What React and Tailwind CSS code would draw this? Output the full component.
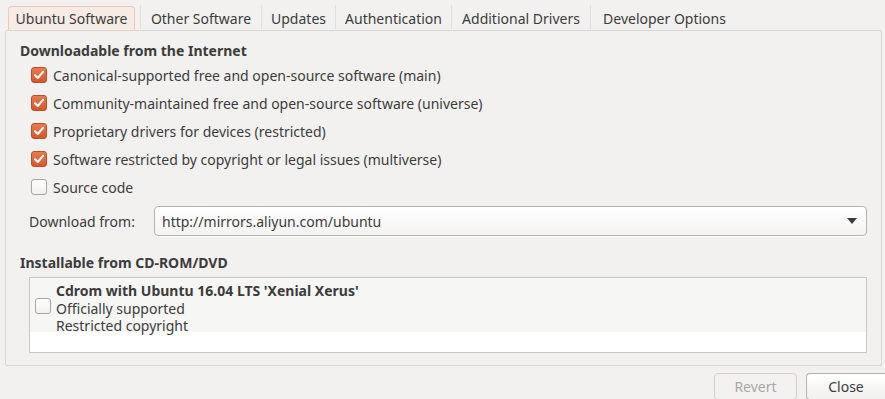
import React, { useState } from "react";

const tabs = [
  { name: "Ubuntu Software", w: "w-[127px]" },
  { name: "Other Software", w: "w-[120px]" },
  { name: "Updates", w: "w-[73px]" },
  { name: "Authentication", w: "w-[115px]" },
  { name: "Additional Drivers", w: "w-[138px]" },
  { name: "Developer Options", w: "w-[147px]" },
];

const sources = [
  { label: "Canonical-supported free and open-source software (main)", on: true },
  { label: "Community-maintained free and open-source software (universe)", on: true },
  { label: "Proprietary drivers for devices (restricted)", on: true },
  { label: "Software restricted by copyright or legal issues (multiverse)", on: true },
  { label: "Source code", on: false },
];

function Check({ on, onClick, className = "" }) {
  return (
    <span
      onClick={onClick}
      className={
        "flex h-[16px] w-[16px] shrink-0 items-center justify-center rounded-[3px] border " +
        (on
          ? "border-[#b5502a] bg-gradient-to-b from-[#ea7a4f] to-[#d4572a] "
          : "border-[#a9a6a2] bg-gradient-to-b from-white to-[#f1f0ee] ") +
        className
      }
    >
      {on && (
        <svg width="12" height="12" viewBox="0 0 12 12">
          <path d="M2 6.2 L4.8 9 L10 2.8" fill="none" stroke="#fff" strokeWidth="2" strokeLinecap="round" strokeLinejoin="round" />
        </svg>
      )}
    </span>
  );
}

export default function App() {
  const [checks, setChecks] = useState(sources.map((s) => s.on));
  const [cdrom, setCdrom] = useState(false);

  return (
    <div
      className="h-[399px] w-[885px] overflow-hidden bg-[#f2f1f0] text-[14px] text-[#3c3c3c]"
      style={{ fontFamily: '"Noto Sans", "Open Sans", sans-serif' }}
    >
      <div className="flex h-[30px] items-end pl-[8px]">
        {tabs.map((t, i) => (
          <div key={t.name} className="flex items-end">
            {i > 0 && <span className="mb-[1px] h-[24px] w-px bg-[#e2e0dd]" />}
            <div
              className={
                "flex h-[24px] items-center justify-center whitespace-nowrap " +
                t.w +
                (i === 0
                  ? " mr-[5px] rounded-t-[4px] border border-b-0 border-[#efc7b4] bg-[#f7ebe5]"
                  : "")
              }
            >
              {t.name}
            </div>
          </div>
        ))}
      </div>

      <div className="mx-[5px] h-[336px] w-[877px] rounded-[2px] border border-[#d9d7d3] bg-[#f2f1f0] px-[14px] pt-[10px]">
        <div className="font-bold leading-[20px]">Downloadable from the Internet</div>
        <div className="flex flex-col">
          {sources.map((s, i) => (
            <label key={s.label} className="flex h-[28px] items-center gap-[6px] pl-[11px]">
              <Check
                on={checks[i]}
                onClick={() => setChecks(checks.map((c, j) => (j === i ? !c : c)))}
              />
              <span>{s.label}</span>
            </label>
          ))}
        </div>

        <div className="mt-[5px] flex items-center pl-[9px]">
          <span className="w-[125px]">Download from:</span>
          <div className="flex h-[30px] flex-1 items-center justify-between rounded-[4px] border border-[#b6b3ae] bg-gradient-to-b from-white to-[#f4f3f2] pl-[7px] pr-[9px] shadow-[0_1px_0_#ffffff]">
            <span>http://mirrors.aliyun.com/ubuntu</span>
            <svg width="10" height="6" viewBox="0 0 10 6">
              <path d="M0 0 H10 L5 6 Z" fill="#3c3c3c" />
            </svg>
          </div>
        </div>

        <div className="mt-[17px] font-bold leading-[20px]">Installable from CD-ROM/DVD</div>
        <div className="ml-[9px] mt-[4px] h-[76px] border border-[#c9c6c1] bg-white">
          <div className="flex h-[54px] items-start bg-[#f6f6f5] pl-[5px]">
            <Check className="mt-[20px]" on={cdrom} onClick={() => setCdrom(!cdrom)} />
            <div className="ml-[5px] mt-[4px] flex flex-col leading-[17.5px]">
              <span className="font-bold">Cdrom with Ubuntu 16.04 LTS 'Xenial Xerus'</span>
              <span>Officially supported</span>
              <span>Restricted copyright</span>
            </div>
          </div>
        </div>
      </div>

      <div className="mt-[7px] flex justify-end gap-[9px]">
        <button
          disabled
          className="h-[27px] w-[83px] rounded-[4px] border border-[#d3d0cc] bg-[#f3f2f1] text-[#a9a7a4]"
        >
          Revert
        </button>
        <button className="h-[27px] w-[79px] rounded-l-[4px] border border-r-0 border-[#b6b3ae] bg-gradient-to-b from-white to-[#f1f0ee]">
          Close
        </button>
      </div>
    </div>
  );
}
